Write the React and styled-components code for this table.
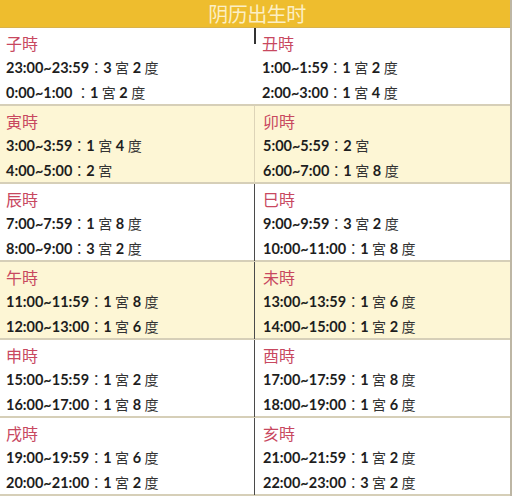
import React from "react";
import styled, { createGlobalStyle } from "styled-components";

const GlobalStyle = createGlobalStyle`
  html, body {
    margin: 0;
    padding: 0;
    background: #ffffff;
  }
`;

const rows = [
  {
    cream: false,
    divider: "short",
    cells: [
      { name: "子時", lines: ["23:00~23:59：3 宮 2 度", "0:00~1:00 ：1 宮 2 度"] },
      { name: "丑時", lines: ["1:00~1:59：1 宮 2 度", "2:00~3:00：1 宮 4 度"] },
    ],
  },
  {
    cream: true,
    divider: "light",
    cells: [
      { name: "寅時", lines: ["3:00~3:59：1 宮 4 度", "4:00~5:00：2 宮"] },
      { name: "卯時", lines: ["5:00~5:59：2 宮", "6:00~7:00：1 宮 8 度"] },
    ],
  },
  {
    cream: false,
    divider: "dark",
    cells: [
      { name: "辰時", lines: ["7:00~7:59：1 宮 8 度", "8:00~9:00：3 宮 2 度"] },
      { name: "巳時", lines: ["9:00~9:59：3 宮 2 度", "10:00~11:00：1 宮 8 度"] },
    ],
  },
  {
    cream: true,
    divider: "dark",
    cells: [
      { name: "午時", lines: ["11:00~11:59：1 宮 8 度", "12:00~13:00：1 宮 6 度"] },
      { name: "未時", lines: ["13:00~13:59：1 宮 6 度", "14:00~15:00：1 宮 2 度"] },
    ],
  },
  {
    cream: false,
    divider: "dark",
    cells: [
      { name: "申時", lines: ["15:00~15:59：1 宮 2 度", "16:00~17:00：1 宮 8 度"] },
      { name: "酉時", lines: ["17:00~17:59：1 宮 8 度", "18:00~19:00：1 宮 6 度"] },
    ],
  },
  {
    cream: false,
    divider: "dark",
    cells: [
      { name: "戌時", lines: ["19:00~19:59：1 宮 6 度", "20:00~21:00：1 宮 2 度"] },
      { name: "亥時", lines: ["21:00~21:59：1 宮 2 度", "22:00~23:00：3 宮 2 度"] },
    ],
  },
];

const Table = styled.div`
  width: 510px;
  border-right: 2px solid #bdb6a4;
  font-family: Lato, "Noto Sans CJK TC", sans-serif;
`;

const Header = styled.div`
  height: 27px;
  background: #eebd2e;
  border-bottom: 1px solid #d9b24a;
  display: flex;
  align-items: center;
  justify-content: center;
  color: #fcefc4;
  font-family: "Noto Sans CJK TC", sans-serif;
  font-size: 20px;
  letter-spacing: -0.5px;
  padding-left: 4px;
`;

const Row = styled.div`
  display: grid;
  grid-template-columns: 254px 1fr;
  height: 76px;
  background: ${(p) => (p.$cream ? "#fdf6d5" : "#ffffff")};
  border-bottom: 2px solid #d6cfb8;
`;

const Cell = styled.div`
  position: relative;
  padding: 3px 0 0 ${(p) => (p.$right ? "8px" : "6px")};
  border-left: ${(p) =>
    !p.$right
      ? "none"
      : p.$divider === "dark"
      ? "1.5px solid #4a4a4a"
      : p.$divider === "light"
      ? "1px solid #ddd4b8"
      : "none"};
`;

const Mark = styled.span`
  position: absolute;
  left: 0;
  top: 0;
  width: 1.5px;
  height: 16px;
  background: #333;
`;

const Name = styled.div`
  height: 24px;
  line-height: 24px;
  font-family: "Noto Sans CJK TC", sans-serif;
  font-size: 16px;
  color: #c8485f;
`;

const Line = styled.div`
  height: 25px;
  line-height: 25px;
  font-size: 14.5px;
  font-weight: 700;
  color: #1e1e1e;
  white-space: pre;
`;

const Cjk = styled.span`
  font-family: "Noto Sans CJK TC", sans-serif;
  font-weight: 400;
  font-size: 14px;
  color: #333;
`;

const renderLine = (text) =>
  text.split(/([\u3000-\u9fff\uff00-\uffef]+)/).map((part, i) =>
    /[\u3000-\u9fff\uff00-\uffef]/.test(part) ? (
      <Cjk key={i}>{part}</Cjk>
    ) : (
      <React.Fragment key={i}>{part}</React.Fragment>
    )
  );

export default function App() {
  return (
    <>
      <GlobalStyle />
      <Table>
        <Header>阴历出生时</Header>
        {rows.map((row, r) => (
          <Row key={r} $cream={row.cream}>
            {row.cells.map((cell, c) => (
              <Cell key={c} $right={c === 1} $divider={row.divider}>
                {c === 1 && row.divider === "short" && <Mark />}
                <Name>{cell.name}</Name>
                {cell.lines.map((l, i) => (
                  <Line key={i}>{renderLine(l)}</Line>
                ))}
              </Cell>
            ))}
          </Row>
        ))}
      </Table>
    </>
  );
}
